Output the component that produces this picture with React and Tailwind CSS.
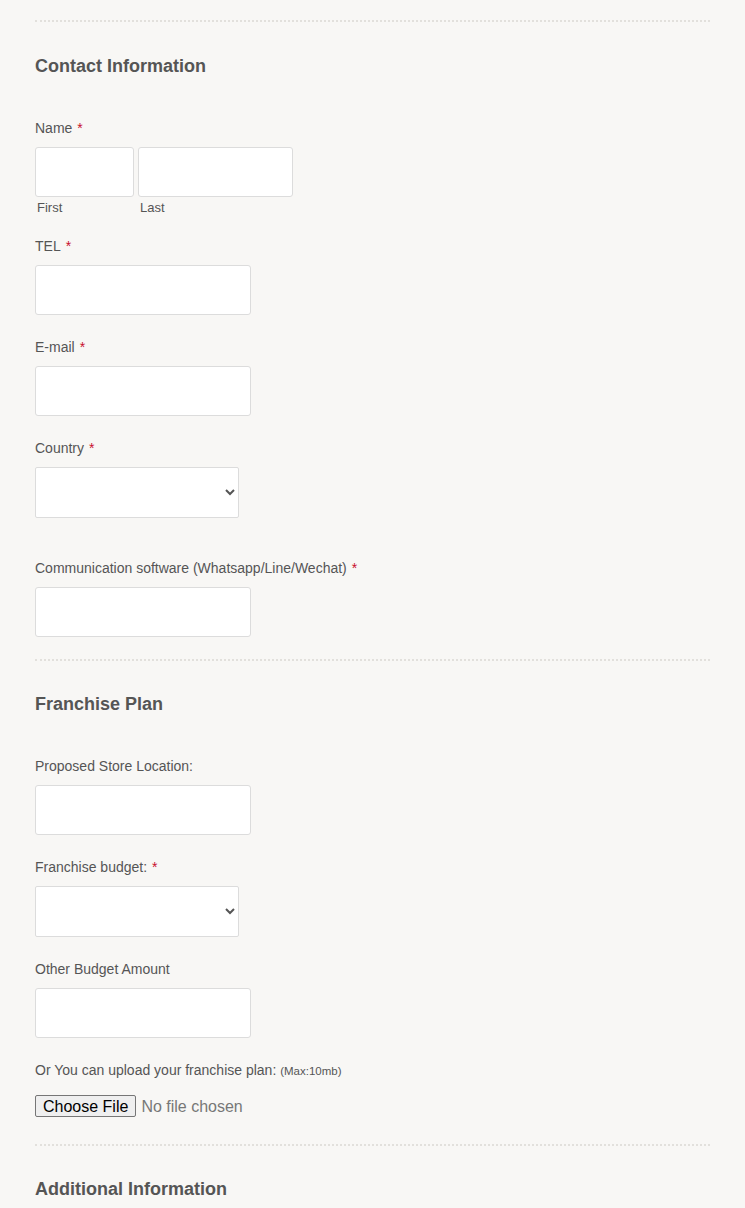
import React from "react";

function Label({ children, required, className = "" }) {
  return (
    <label className={`block text-[14px] leading-5 text-[#555] ${className}`}>
      {children}
      {required && <span className="ml-[5px] text-[#c8102e]">*</span>}
    </label>
  );
}

function TextInput({ className = "" }) {
  return (
    <input
      type="text"
      className={`mt-[9px] block h-[50px] w-[216px] rounded-[3px] border border-[#dcdcdc] bg-white px-2 ${className}`}
    />
  );
}

function Select() {
  return (
    <select className="mt-[9px] block h-[51px] w-[204px] rounded-[2px] border border-[#dcdcdc] bg-white px-2 text-[14px] text-[#555]">
      <option value=""></option>
    </select>
  );
}

function Divider({ className = "" }) {
  return <div className={`border-t-2 border-dotted border-[#e2e0dc] ${className}`} />;
}

function Heading({ children, className = "" }) {
  return <h2 className={`text-[18px] font-bold leading-5 text-[#555] ${className}`}>{children}</h2>;
}

export default function App() {
  return (
    <div className="min-h-[1208px] bg-[#f8f7f5] px-[35px] pt-5 font-['Liberation_Sans',Arial,sans-serif]">
      <Divider />

      <Heading className="mt-[34px]">Contact Information</Heading>

      <Label required className="mt-[42px]">Name</Label>
      <div className="mt-[9px] flex gap-1">
        <div>
          <input type="text" className="block h-[50px] w-[99px] rounded-[3px] border border-[#dcdcdc] bg-white px-2" />
          <span className="ml-[2px] mt-[3px] block text-[13px] leading-4 text-[#555]">First</span>
        </div>
        <div>
          <input type="text" className="block h-[50px] w-[155px] rounded-[3px] border border-[#dcdcdc] bg-white px-2" />
          <span className="ml-[2px] mt-[3px] block text-[13px] leading-4 text-[#555]">Last</span>
        </div>
      </div>

      <Label required className="mt-[20px]">TEL</Label>
      <TextInput />

      <Label required className="mt-[22px]">E-mail</Label>
      <TextInput />

      <Label required className="mt-[22px]">Country</Label>
      <Select />

      <Label required className="mt-[40px]">Communication software (Whatsapp/Line/Wechat)</Label>
      <TextInput />

      <Divider className="mt-[22px]" />

      <Heading className="mt-[33px]">Franchise Plan</Heading>

      <Label className="mt-[42px]">Proposed Store Location:</Label>
      <TextInput />

      <Label required className="mt-[22px]">Franchise budget:</Label>
      <Select />

      <Label className="mt-[22px]">Other Budget Amount</Label>
      <TextInput />

      <Label className="mt-[22px]">
        Or You can upload your franchise plan: <span className="text-[11.5px]">(Max:10mb)</span>
      </Label>
      <input
        type="file"
        className="mt-[14px] block h-[22px] text-[16px] leading-[22px] text-[#777] file:mr-[5px] file:h-[22px] file:rounded-[2px] file:border file:border-[#767676] file:bg-[#efefef] file:px-[7px] file:text-[16px] file:text-black"
      />

      <Divider className="mt-[27px]" />

      <Heading className="mt-[33px]">Additional Information</Heading>
    </div>
  );
}
